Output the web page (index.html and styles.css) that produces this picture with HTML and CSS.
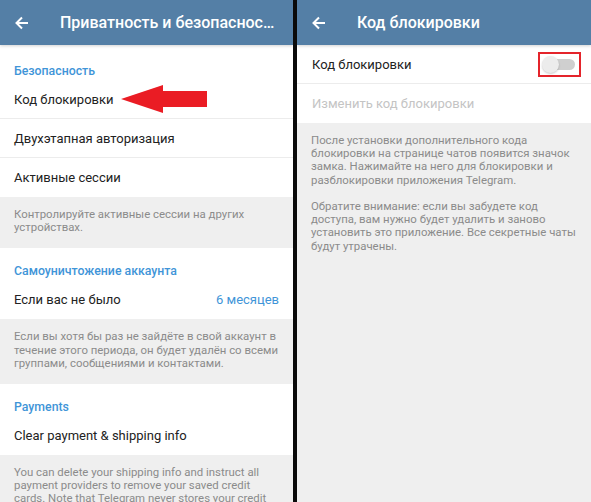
FILE: index.html
```html
<!DOCTYPE html>
<html lang="ru">
<head>
<meta charset="utf-8">
<title>Telegram</title>
<link rel="stylesheet" href="styles.css">
</head>
<body>
<div class="screen">
  <section class="panel left">
    <header class="bar">
      <svg class="back" width="14" height="14" viewBox="0 0 14 14"><path d="M13 7H2M7 1.5L1.5 7L7 12.5" fill="none" stroke="#fff" stroke-width="2"/></svg>
      <span class="title">Приватность и безопасноc…</span>
    </header>
    <div class="content">
      <div class="group first">
        <div class="gh">Безопасность</div>
        <div class="row divided">
          <span>Код блокировки</span>
          <svg class="pointer" width="88" height="30" viewBox="0 0 88 30"><polygon points="0,14 42,0 42,6 86,6 86,22 42,22 42,28" fill="#ea1c24"/></svg>
        </div>
        <div class="row divided">Двухэтапная авторизация</div>
        <div class="row">Активные сессии</div>
      </div>
      <p class="info">Контролируйте активные сессии на других<br>устройствах.</p>
      <div class="group">
        <div class="gh">Самоуничтожение аккаунта</div>
        <div class="row split"><span>Если вас не было</span><span class="value">6 месяцев</span></div>
      </div>
      <p class="info">Если вы хотя бы раз не зайдёте в свой аккаунт в<br>течение этого периода, он будет удалён со всеми<br>группами, сообщениями и контактами.</p>
      <div class="group">
        <div class="gh">Payments</div>
        <div class="row">Clear payment &amp; shipping info</div>
      </div>
      <p class="info tail">You can delete your shipping info and instruct all<br>payment providers to remove your saved credit<br>cards. Note that Telegram never stores your credit<br>card data.</p>
    </div>
  </section>
  <div class="divider"></div>
  <section class="panel right">
    <header class="bar">
      <svg class="back" width="14" height="14" viewBox="0 0 14 14"><path d="M13 7H2M7 1.5L1.5 7L7 12.5" fill="none" stroke="#fff" stroke-width="2"/></svg>
      <span class="title">Код блокировки</span>
    </header>
    <div class="content">
      <div class="group plain">
        <div class="row divided split">
          <span>Код блокировки</span>
          <span class="mark"><span class="switch"><span class="knob"></span></span></span>
        </div>
        <div class="row disabled">Изменить код блокировки</div>
      </div>
      <p class="info">После установки дополнительного кода<br>блокировки на странице чатов появится значок<br>замка. Нажимайте на него для блокировки и<br>разблокировки приложения Telegram.<br><br>Обратите внимание: если вы забудете код<br>доступа, вам нужно будет удалить и заново<br>установить это приложение. Все секретные чаты<br>будут утрачены.</p>
    </div>
  </section>
</div>
</body>
</html>
```

FILE: styles.css
```css
* { box-sizing: border-box; }
html, body { margin: 0; padding: 0; }
body {
  width: 591px;
  height: 502px;
  overflow: hidden;
  font-family: Roboto, "Noto Sans", "Liberation Sans", sans-serif;
  background: #efefef;
}
.screen {
  display: flex;
  height: 502px;
}
.panel {
  display: flex;
  flex-direction: column;
  background: #efefef;
  overflow: hidden;
}
.left { width: 293px; }
.right { flex: 1; }
.divider {
  width: 4px;
  background: #0a0a0a;
}
.bar {
  height: 45px;
  flex: none;
  background: #547fa6;
  display: flex;
  align-items: center;
  padding-left: 15px;
  box-shadow: 0 1px 3px rgba(0,0,0,0.18);
  position: relative;
  z-index: 1;
}
.back { flex: none; margin-right: 31px; }
.title {
  color: #fff;
  font-size: 16px;
  font-weight: 500;
  white-space: nowrap;
  overflow: hidden;
  text-overflow: ellipsis;
  padding-right: 10px;
}
.content { flex: 1; }
.group {
  background: #fff;
}
.group.first { padding-top: 3px; }
.gh {
  height: 32px;
  padding: 15px 14px 0;
  font-size: 12.3px;
  line-height: 16px;
  font-weight: 500;
  color: #3f95d8;
}
.row {
  height: 39px;
  display: flex;
  align-items: center;
  padding: 0 14px;
  font-size: 13px;
  color: #222;
  position: relative;
}
.right .row { padding: 0 14px 0 15px; }
.row.divided { border-bottom: 1px solid #ececec; }
.row.split { justify-content: space-between; }
.value { color: #3f95d8; }
.disabled { color: #c4c4c4; }
.pointer {
  position: absolute;
  left: 121px;
  top: 5px;
}
.info {
  margin: 0;
  padding: 11px 14px 14px;
  font-size: 11.4px;
  line-height: 13.2px;
  color: #8b8b8b;
  white-space: nowrap;
}
.right .info { padding-left: 14px; }
.mark {
  border: 2px solid #e4242b;
  width: 43px;
  height: 25px;
  margin-right: -4px;
  display: flex;
  align-items: center;
  padding-left: 3px;
}
.switch {
  width: 30px;
  height: 11px;
  border-radius: 6px;
  background: #cfcfcf;
  position: relative;
  margin-left: 2px;
}
.knob {
  position: absolute;
  left: -3px;
  top: -3px;
  width: 17px;
  height: 17px;
  border-radius: 50%;
  background: #ececec;
  box-shadow: 0 1px 2px rgba(0,0,0,0.2);
}
```
